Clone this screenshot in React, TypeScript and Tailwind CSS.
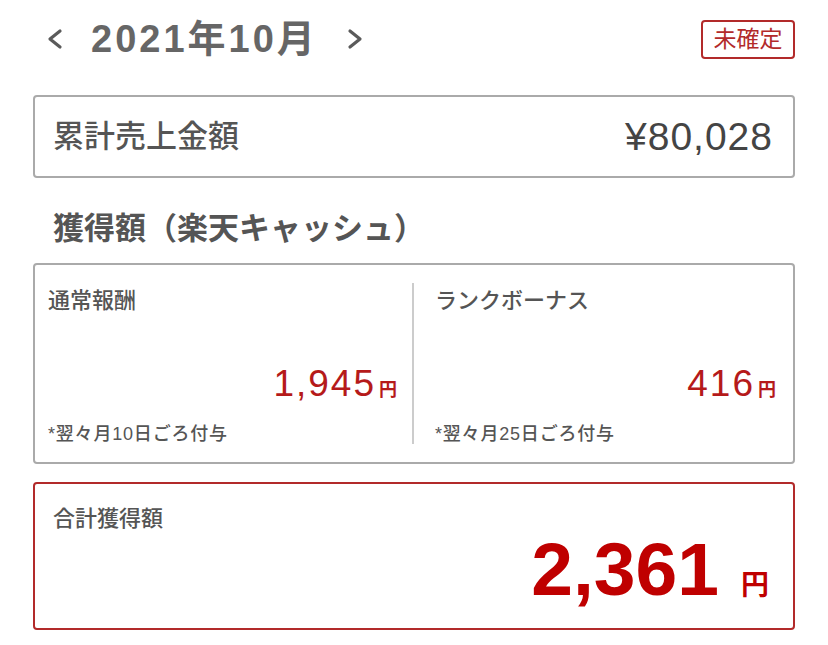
import React from "react";

// ─── helpers ────────────────────────────────────────────────────────────────

const FONT = "font-['Liberation_Sans','Noto_Sans_CJK_JP',sans-serif]";

function Chevron({ dir }: { dir: "left" | "right" }) {
  return (
    <svg width="16" height="22" viewBox="0 0 16 22" className="shrink-0">
      <path
        d={dir === "left" ? "M13 3 L3 11 L13 19" : "M3 3 L13 11 L3 19"}
        fill="none"
        stroke="#5a5a5a"
        strokeWidth="3.2"
        strokeLinecap="round"
        strokeLinejoin="round"
      />
    </svg>
  );
}

function RewardColumn({
  label,
  amount,
  note,
  className,
}: {
  label: string;
  amount: string;
  note: string;
  className: string;
}) {
  return (
    <div className={`flex flex-col ${className}`}>
      <p className="text-[22px] leading-[26px] font-medium text-[#555]">{label}</p>
      <div className="mt-auto flex items-baseline justify-end">
        <span className="text-[37px] leading-none text-[#b51a1a] tracking-[2px]">{amount}</span>
        <span className="ml-[3px] text-[18px] leading-none font-bold text-[#b51a1a]">円</span>
      </div>
      <p className="mt-[22px] text-[18px] leading-[20px] font-medium text-[#555] tracking-[0.8px]">
        {note}
      </p>
    </div>
  );
}

// ─── main page ────────────────────────────────────────────────────────────────

export default function App() {
  return (
    <div className={`w-[828px] h-[645px] bg-white px-[33px] ${FONT}`}>
      {/* Header */}
      <div className="flex h-[80px] items-center justify-between pb-[2px]">
        <div className="flex items-center pl-[14px]">
          <Chevron dir="left" />
          <h1 className="ml-[28px] text-[38px] leading-none font-bold text-[#666] tracking-[3px]">
            2021年10月
          </h1>
          <div className="ml-[29px]">
            <Chevron dir="right" />
          </div>
        </div>
        <span className="flex h-[39px] w-[94px] items-center justify-center rounded-[4px] border-[2px] border-[#b22a2a] text-[23px] leading-none text-[#b22a2a]">
          未確定
        </span>
      </div>

      {/* Cumulative sales */}
      <div className="mt-[15px] flex h-[83px] items-center justify-between rounded-[4px] border-[2px] border-[#aaa] pl-[18px] pr-[20px]">
        <span className="text-[31px] leading-none font-medium text-[#555]">累計売上金額</span>
        <span className="text-[39px] leading-none text-[#444] tracking-[1px]">¥80,028</span>
      </div>

      {/* Section heading */}
      <h2 className="mt-[33px] pl-[20px] text-[31px] leading-[36px] font-bold text-[#555]">
        獲得額（楽天キャッシュ）
      </h2>

      {/* Reward breakdown */}
      <div className="mt-[16px] grid h-[201px] grid-cols-2 rounded-[4px] border-[2px] border-[#aaa] py-[18px]">
        <div className="border-r-[2px] border-[#ccc]">
          <RewardColumn
            label="通常報酬"
            amount="1,945"
            note="*翌々月10日ごろ付与"
            className="h-full pl-[13px] pr-[15px] pt-[5px]"
          />
        </div>
        <RewardColumn
          label="ランクボーナス"
          amount="416"
          note="*翌々月25日ごろ付与"
          className="h-full pl-[21px] pr-[17px] pt-[5px]"
        />
      </div>

      {/* Total */}
      <div className="mt-[18px] flex h-[148px] flex-col rounded-[4px] border-[2px] border-[#b22a2a] pl-[18px] pr-[24px] pt-[22px]">
        <p className="text-[22px] leading-[26px] font-medium text-[#555]">合計獲得額</p>
        <div className="mt-auto mb-[24px] flex items-baseline justify-end">
          <span className="text-[75px] leading-none font-bold text-[#bf0000]">2,361</span>
          <span className="ml-[22px] text-[28px] leading-none font-bold text-[#bf0000]">円</span>
        </div>
      </div>
    </div>
  );
}
